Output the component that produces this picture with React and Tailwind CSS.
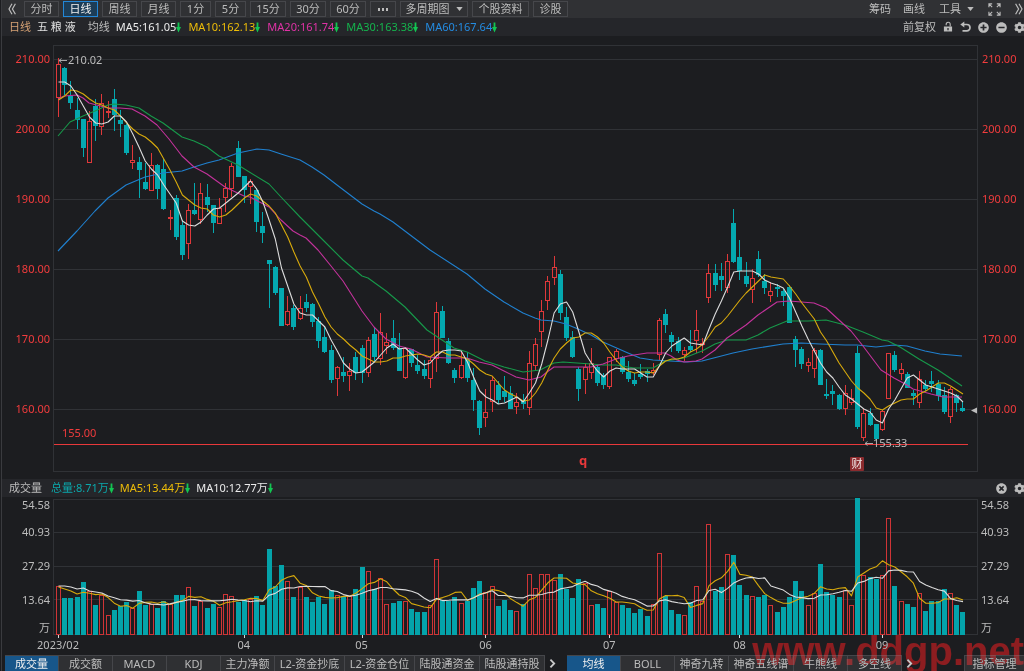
import React, { useState } from 'react';
import { FaCog, FaPlusCircle, FaMinusCircle, FaTimesCircle } from 'react-icons/fa';

// [up, high, bodyTop, bodyBottom, low, volumeTop] in panel coordinates
const CANDLES = [
  [1, 58, 64, 98, 117, 586], [0, 67, 68, 85, 95, 598], [0, 81, 96, 103, 109, 598], [0, 98, 110, 120, 129, 597],
  [0, 119, 119, 148, 157, 582], [1, 111, 121, 163, 163, 591], [0, 99, 106, 126, 141, 605], [1, 94, 103, 127, 135, 595],
  [1, 101, 111, 113, 118, 615], [0, 89, 99, 115, 131, 610], [0, 110, 120, 124, 137, 606], [0, 124, 125, 153, 155, 602],
  [1, 145, 160, 163, 169, 608], [0, 157, 162, 170, 198, 591], [0, 163, 182, 189, 190, 605], [1, 153, 165, 191, 191, 604],
  [0, 164, 165, 189, 199, 608], [0, 159, 169, 209, 210, 601], [1, 210, 217, 219, 230, 604], [0, 195, 198, 237, 240, 595],
  [0, 220, 225, 255, 260, 595], [1, 204, 210, 244, 259, 587], [0, 183, 210, 214, 215, 606], [1, 183, 193, 220, 224, 601],
  [0, 184, 197, 205, 212, 608], [0, 205, 205, 223, 233, 604], [1, 198, 208, 224, 224, 607], [1, 183, 188, 198, 212, 594],
  [1, 163, 166, 189, 197, 596], [0, 141, 148, 177, 177, 602], [0, 176, 176, 190, 203, 600], [1, 179, 181, 187, 204, 599],
  [0, 188, 190, 222, 232, 596], [0, 212, 226, 233, 243, 605], [0, 260, 260, 264, 308, 549], [0, 266, 267, 293, 295, 586],
  [0, 288, 288, 326, 326, 565], [1, 296, 311, 325, 326, 581], [0, 305, 308, 327, 330, 597], [1, 296, 308, 319, 320, 587],
  [0, 294, 302, 308, 312, 597], [0, 303, 304, 322, 327, 602], [0, 317, 321, 341, 348, 597], [0, 327, 337, 352, 353, 604],
  [0, 345, 350, 380, 383, 590], [1, 366, 367, 379, 396, 595], [0, 357, 372, 376, 382, 596], [1, 363, 371, 376, 391, 596],
  [0, 352, 357, 373, 380, 589], [0, 345, 348, 373, 383, 567], [1, 337, 340, 373, 377, 571], [0, 327, 334, 357, 361, 589],
  [1, 313, 332, 359, 365, 578], [1, 333, 342, 346, 354, 604], [0, 320, 338, 348, 350, 603], [0, 333, 348, 371, 371, 601],
  [1, 347, 348, 378, 379, 601], [0, 349, 349, 363, 367, 609], [0, 355, 365, 371, 374, 612], [0, 360, 369, 376, 379, 612],
  [1, 357, 360, 379, 388, 605], [1, 302, 312, 359, 372, 559], [0, 306, 311, 338, 338, 600], [0, 338, 341, 363, 364, 601],
  [0, 368, 370, 378, 383, 597], [1, 352, 365, 378, 379, 603], [0, 352, 359, 378, 382, 601], [0, 368, 380, 400, 411, 588],
  [0, 400, 401, 428, 435, 581], [1, 389, 412, 418, 427, 592], [1, 376, 380, 402, 412, 586], [0, 381, 385, 400, 404, 606],
  [0, 376, 391, 397, 402, 600], [0, 386, 393, 409, 409, 610], [1, 393, 402, 407, 414, 611], [0, 394, 400, 404, 409, 604],
  [1, 351, 363, 408, 415, 574], [1, 338, 344, 366, 370, 588], [1, 300, 311, 332, 347, 574], [1, 276, 281, 301, 310, 574],
  [1, 256, 267, 278, 285, 580], [0, 270, 274, 313, 320, 574], [0, 307, 317, 338, 341, 589], [0, 331, 337, 357, 358, 598],
  [0, 367, 369, 389, 401, 579], [1, 363, 367, 380, 394, 583], [1, 348, 363, 373, 379, 605], [0, 364, 367, 383, 386, 604],
  [0, 373, 375, 385, 389, 608], [1, 357, 357, 387, 389, 591], [1, 349, 351, 359, 362, 602], [0, 356, 357, 372, 374, 605],
  [0, 361, 372, 379, 382, 608], [0, 373, 380, 384, 386, 613], [0, 364, 374, 377, 379, 609], [0, 369, 371, 374, 382, 616],
  [1, 363, 370, 373, 375, 604], [1, 318, 320, 355, 360, 553], [0, 309, 314, 325, 333, 596], [0, 332, 335, 342, 352, 610],
  [0, 337, 341, 351, 353, 614], [1, 347, 350, 355, 361, 615], [0, 330, 346, 350, 352, 602], [1, 310, 330, 341, 353, 586],
  [1, 338, 343, 345, 353, 601], [1, 264, 273, 298, 303, 524], [0, 264, 273, 285, 291, 591], [0, 263, 276, 280, 291, 587],
  [1, 254, 261, 288, 293, 554], [0, 209, 223, 262, 263, 555], [0, 240, 257, 271, 280, 585], [0, 262, 276, 284, 287, 595],
  [1, 269, 278, 290, 303, 596], [0, 251, 259, 275, 277, 597], [0, 274, 281, 288, 294, 595], [1, 282, 291, 296, 302, 605],
  [0, 284, 287, 289, 297, 612], [0, 289, 291, 296, 306, 607], [0, 285, 287, 323, 323, 597], [0, 336, 339, 350, 367, 581],
  [0, 347, 349, 364, 369, 591], [1, 358, 362, 366, 372, 605], [1, 348, 350, 369, 378, 593], [0, 349, 350, 385, 385, 564],
  [0, 379, 394, 396, 399, 592], [0, 385, 391, 394, 405, 595], [0, 394, 395, 409, 410, 597], [1, 385, 393, 409, 415, 590],
  [1, 389, 398, 403, 405, 605], [0, 346, 353, 427, 429, 498], [1, 409, 413, 438, 441, 575], [0, 408, 413, 425, 426, 577],
  [0, 424, 424, 439, 440, 579], [1, 410, 411, 430, 431, 575], [1, 353, 353, 399, 399, 518], [0, 351, 355, 370, 372, 586],
  [1, 363, 369, 374, 380, 601], [0, 372, 374, 388, 388, 604], [0, 390, 393, 396, 405, 607], [1, 371, 379, 403, 408, 593],
  [0, 380, 385, 389, 391, 611], [0, 371, 381, 384, 392, 601], [0, 380, 384, 396, 401, 601], [0, 387, 395, 412, 414, 589],
  [1, 387, 389, 417, 423, 593], [0, 394, 395, 403, 412, 605], [0, 402, 408, 411, 412, 612],
];

const MA5 = [
  82, 82, 86, 95, 106, 117, 123, 124, 122, 116, 116, 122, 134, 147, 161, 169, 175, 185, 194, 203, 221, 225, 226, 222,
  215, 209, 208, 203, 198, 193, 187, 181, 189, 202, 220, 239, 268, 286, 304, 313, 315, 315, 321, 327, 340, 351, 363, 369,
  373, 372, 367, 362, 355, 348, 344, 349, 348, 354, 360, 365, 363, 356, 351, 350, 350, 351, 362, 377, 391, 397, 400, 404,
  403, 400, 397, 402, 393, 383, 364, 340, 313, 304, 302, 312, 332, 353, 363, 371, 377, 371, 368, 369, 369, 369, 373, 377,
  377, 366, 353, 346, 342, 338, 343, 344, 345, 329, 314, 301, 287, 272, 271, 271, 271, 274, 280, 283, 285, 288, 298, 312,
  326, 339, 351, 363, 372, 378, 387, 395, 399, 404, 409, 412, 420, 423, 409, 400, 389, 378, 375, 380, 385, 387, 389, 391,
  393, 396, 402,
];

const MA10 = [
  100, 96, 90, 91, 94, 99, 103, 105, 108, 110, 116, 123, 129, 134, 137, 142, 148, 159, 170, 182, 195, 200, 205, 208,
  209, 215, 217, 215, 210, 204, 198, 194, 196, 201, 206, 213, 225, 237, 252, 266, 277, 292, 304, 317, 327, 334, 339, 345,
  350, 356, 359, 362, 362, 361, 358, 358, 356, 355, 354, 355, 357, 352, 352, 355, 355, 357, 359, 364, 370, 374, 376, 383,
  390, 394, 397, 401, 400, 393, 383, 370, 358, 349, 343, 338, 337, 333, 333, 337, 343, 352, 360, 367, 371, 373, 372, 372,
  373, 366, 361, 359, 359, 357, 352, 349, 344, 336, 327, 323, 316, 308, 300, 293, 287, 281, 275, 277, 278, 279, 286, 294,
  303, 311, 319, 332, 341, 352, 363, 372, 381, 388, 393, 399, 408, 410, 406, 403, 400, 399, 399, 394, 391, 387, 383, 383,
  386, 390, 394,
];

const MA20 =
  '58,99 64,96 77,95 83,98 89,103 108,108 120,108 132,109 145,116 157,125 169,139 182,156 194,167 207,174 225,187 244,196 250,197 269,207 281,220 293,231 300,235 306,238 318,250 331,266 343,281 362,311 374,327 386,339 399,346 411,349 427,357 448,358 467,358 479,362 492,365 504,371 516,377 529,380 541,377 547,372 554,367 591,367 603,364 616,359 628,356 647,353 665,353 671,356 677,360 684,362 696,361 702,359 715,350 727,338 746,325 758,315 777,302 789,301 814,303 826,308 839,320 851,331 863,346 881,370 894,378 907,385 913,389 931,394 943,397 962,397';
const MA30 =
  '58,136 70,122 83,116 95,111 108,105 114,104 126,105 139,108 151,116 163,123 182,137 194,141 207,147 219,156 238,165 269,184 281,197 300,217 324,241 343,260 362,276 368,278 386,291 405,307 427,330 442,340 454,348 467,352 485,361 504,367 523,372 540,370 554,363 563,362 591,364 603,365 616,365 634,368 653,368 665,361 684,358 702,351 715,344 727,340 746,340 758,335 770,328 787,321 808,321 826,320 845,325 863,332 882,340 888,341 900,347 919,359 938,370 950,378 962,386';
const MA60 =
  '58,251 77,231 95,211 108,198 126,185 145,177 163,173 182,171 194,167 207,163 219,160 238,153 257,149 269,150 281,154 300,160 312,167 324,175 337,185 362,204 374,211 380,214 393,222 430,250 467,274 485,289 504,302 523,313 535,318 541,320 554,321 566,324 578,329 591,335 603,342 628,353 640,358 653,360 687,362 702,361 733,353 752,349 783,344 801,343 820,344 845,345 857,345 876,347 894,345 907,346 925,351 940,354 962,356';

const BASE = 635;
const xOf = (i) => 58 + i * 6.195;
const toLine = (ys) => ys.map((y, i) => `${(xOf(i) + 0.5).toFixed(1)},${y}`).join(' ');

// Moving average of the volume bars; seed holds the values before the window is full
const volumeAverage = (days, seed) =>
  CANDLES.map((_, i) => {
    if (i < seed.length) return seed[i];
    let sum = 0;
    for (let k = i - days + 1; k <= i; k++) sum += BASE - CANDLES[k][5];
    return BASE - sum / days;
  });

const VOL_MA5 = volumeAverage(5, [587, 589, 591, 594]);
const VOL_MA10 = volumeAverage(10, [586, 586, 587, 589, 588, 591, 592, 593, 596]);

const PERIODS = [
  { label: '分时', width: 'w-[35px]' },
  { label: '日线', width: 'w-[35px]' },
  { label: '周线', width: 'w-[35px]' },
  { label: '月线', width: 'w-[35px]' },
  { label: '1分', width: 'w-[31px]' },
  { label: '5分', width: 'w-[31px]' },
  { label: '15分', width: 'w-[36px]' },
  { label: '30分', width: 'w-[36px]' },
  { label: '60分', width: 'w-[36px]' },
];

const PRICE_MA = [
  { text: 'MA5:161.05', color: 'text-[#ececec]' },
  { text: 'MA10:162.13', color: 'text-[#eebd08]' },
  { text: 'MA20:161.74', color: 'text-[#e032a6]' },
  { text: 'MA30:163.38', color: 'text-[#15b34d]' },
  { text: 'MA60:167.64', color: 'text-[#248ce2]' },
];

const VOLUME_MA = [
  { text: '总量:8.71万', color: 'text-[#0ba8ac]' },
  { text: 'MA5:13.44万', color: 'text-[#eebd08]' },
  { text: 'MA10:12.77万', color: 'text-[#ececec]' },
];

const LEFT_TABS = [
  { label: '成交量', width: 'w-[54px]' },
  { label: '成交额', width: 'w-[54px]' },
  { label: 'MACD', width: 'w-[54px]' },
  { label: 'KDJ', width: 'w-[54px]' },
  { label: '主力净额', width: 'w-[54px]' },
  { label: 'L2-资金抄底', width: 'w-[70px]' },
  { label: 'L2-资金仓位', width: 'w-[70px]' },
  { label: '陆股通资金', width: 'w-[65px]' },
  { label: '陆股通持股', width: 'w-[65px]' },
];

const RIGHT_TABS = [
  { label: '均线', width: 'w-[54px]' },
  { label: 'BOLL', width: 'w-[54px]' },
  { label: '神奇九转', width: 'w-[54px]' },
  { label: '神奇五线谱', width: 'w-[65px]' },
  { label: '牛熊线', width: 'w-[54px]' },
  { label: '多空线', width: 'w-[54px]' },
];

const MONTHS = [
  { i: 0, label: '2023/02' },
  { i: 30, label: '04' },
  { i: 49, label: '05' },
  { i: 69, label: '06' },
  { i: 89, label: '07' },
  { i: 110, label: '08' },
  { i: 133, label: '09' },
];

const Caret = () => (
  <svg viewBox="0 0 8 5" className="h-[4px] w-[7px] fill-current" aria-hidden="true">
    <path d="M0 0h8L4 5z" />
  </svg>
);

const DownArrow = () => (
  <svg viewBox="0 0 5 11" className="h-[11px] w-[5px]" aria-hidden="true">
    <path d="M1.6 0.5h1.800v4.500H5L2.500 10.500 0 5h1.600z" fill="#12c552" />
  </svg>
);

const DoubleChevron = ({ flip }) => (
  <svg viewBox="0 0 8 12" className={flip ? 'h-3 w-2 rotate-180' : 'h-3 w-2'} fill="none" stroke="currentColor" strokeWidth="1.2" aria-hidden="true">
    <path d="M4 0.8 1 6l3 5.2M7.4 0.8l-3 5.2 3 5.2" />
  </svg>
);

const NextChevron = () => (
  <svg viewBox="0 0 7 10" className="h-[9px] w-[7px]" fill="none" stroke="#c9c9c9" strokeWidth="2" aria-hidden="true">
    <path d="M1.2 0.8 5.4 5 1.2 9.2" />
  </svg>
);

const Legend = ({ items, gap }) => (
  <div className={`flex ${gap}`}>
    {items.map((item) => (
      <span key={item.text} className={`flex items-center ${item.color}`}>
        {item.text}
        <DownArrow />
      </span>
    ))}
  </div>
);

const TabStrip = ({ tabs, active, onSelect }) => (
  <div className="flex">
    {tabs.map((tab) => (
      <button
        key={tab.label}
        onClick={() => onSelect(tab.label)}
        className={`${tab.width} h-4 shrink-0 whitespace-nowrap border-t border-r border-[#45464a] text-center leading-[15px] ${
          active === tab.label ? 'bg-[#17568a] text-[#f0f0f0]' : 'bg-[#2f3033] text-[#bcbcbc]'
        }`}
      >
        {tab.label}
      </button>
    ))}
  </div>
);

const PriceChart = () => (
  <svg viewBox="2 36 1022 443" className="block h-auto w-full" role="img" aria-label="日线">
    <g fill="none" stroke="#303236" shapeRendering="crispEdges">
      <rect x="53.5" y="45.5" width="924" height="426" />
      {[59.5, 129.5, 199.5, 269.5, 339.5, 409.5].map((y) => (
        <path key={y} d={`M54 ${y}H977`} />
      ))}
    </g>

    <g fill="#f23c3d">
      {[210, 200, 190, 180, 170, 160].map((price, n) => (
        <React.Fragment key={price}>
          <text x="50" y={63 + n * 70} textAnchor="end">{price}.00</text>
          <text x="982" y={63 + n * 70}>{price}.00</text>
        </React.Fragment>
      ))}
      <text x="62" y="437">155.00</text>
    </g>

    <g shapeRendering="crispEdges">
      {CANDLES.map(([up, high, top, bottom, low], i) => {
        const x = Math.round(xOf(i));
        return up ? (
          <g key={i} fill="none" stroke="#e0383a">
            <path d={`M${x + 0.5} ${high}V${top}M${x + 0.5} ${bottom}V${low}`} />
            <rect x={x - 1.5} y={top + 0.5} width="4" height={Math.max(bottom - top - 1, 1)} />
          </g>
        ) : (
          <g key={i} fill="#04a9b0">
            <rect x={x} y={high} width="1" height={low - high} />
            <rect x={x - 2} y={top} width="5" height={bottom - top} />
          </g>
        );
      })}
    </g>

    <path d="M54 444.5H968" stroke="#e8383a" shapeRendering="crispEdges" />

    <g fill="none" strokeWidth="1.1" strokeLinejoin="round">
      <polyline points={MA60} stroke="#2080cf" />
      <polyline points={MA30} stroke="#17994a" />
      <polyline points={MA20} stroke="#c3329b" />
      <polyline points={toLine(MA10)} stroke="#d8aa0c" />
      <polyline points={toLine(MA5)} stroke="#dcdcdc" />
    </g>

    <g fill="#bcbcbc">
      <path d="M59 60.5h8M61.5 58.5l-2.5 2 2.5 2M865 443.5h8M867.5 441.5l-2.5 2 2.5 2" fill="none" stroke="#a9a9a9" />
      <text x="68" y="64">210.02</text>
      <text x="873" y="447">155.33</text>
      <path d="M971 410.5l6-3v6z" />
    </g>

    <text x="583" y="465" textAnchor="middle" fill="#e8383a" className="text-[13px] font-bold">q</text>
    <rect x="850" y="457" width="14" height="14" rx="1" fill="#8b2b2e" />
    <text x="857" y="468" textAnchor="middle" fill="#f0e4e4">财</text>
  </svg>
);

const VolumeChart = () => (
  <svg viewBox="2 497 1022 158" className="block h-auto w-full" role="img" aria-label="成交量">
    <g fill="none" stroke="#303236" shapeRendering="crispEdges">
      <rect x="53.5" y="499.5" width="924" height="135" />
      {[532.5, 566.5, 599.5].map((y) => (
        <path key={y} d={`M54 ${y}H977`} />
      ))}
    </g>

    <g shapeRendering="crispEdges">
      {CANDLES.map(([up, , , , , top], i) => {
        const x = Math.round(xOf(i)) - 2;
        return up ? (
          <rect key={i} x={x + 0.5} y={top + 0.5} width="4" height={BASE - top - 1} fill="none" stroke="#cf3436" />
        ) : (
          <rect key={i} x={x} y={top} width="5" height={BASE - top} fill="#04a3aa" />
        );
      })}
    </g>

    <g fill="none" strokeWidth="1.1" strokeLinejoin="round">
      <polyline points={toLine(VOL_MA5)} stroke="#d8aa0c" />
      <polyline points={toLine(VOL_MA10)} stroke="#dcdcdc" />
    </g>

    <g fill="#bcbcbc">
      {[['54.58', 509], ['40.93', 536], ['27.29', 570], ['13.64', 604], ['万', 632]].map(([label, y]) => (
        <React.Fragment key={label}>
          <text x="50" y={y} textAnchor="end">{label}</text>
          <text x="981" y={y}>{label}</text>
        </React.Fragment>
      ))}
      {MONTHS.map(({ i, label }) => (
        <React.Fragment key={label}>
          <rect x={Math.round(xOf(i))} y="635" width="1" height="3" fill="#d8d8d8" />
          <text x={xOf(i)} y="649" textAnchor="middle">{label}</text>
        </React.Fragment>
      ))}
    </g>
  </svg>
);

const App = () => {
  const [period, setPeriod] = useState('日线');
  const [indicator, setIndicator] = useState('成交量');
  const [overlay, setOverlay] = useState('均线');

  const boxed = 'flex h-4 shrink-0 items-center justify-center whitespace-nowrap border';

  return (
    <div className="relative w-full overflow-hidden bg-[#1c1d20] pl-px font-['Noto_Sans','Noto_Sans_CJK_SC',sans-serif] text-[11px] leading-4 text-[#bcbcbc]">
      <div className="border-l border-[#3a3b3f]">
        {/* Period toolbar */}
        <div className="flex h-[18px] items-center bg-[#303134] pl-[6px]">
          <button aria-label="收起" className="mr-2"><DoubleChevron /></button>
          <div className="flex gap-1">
            {PERIODS.map(({ label, width }) => (
              <button
                key={label}
                onClick={() => setPeriod(label)}
                className={`${boxed} ${width} ${
                  period === label ? 'border-[#2287d8] bg-[#1d3d57] text-[#f0f0f0]' : 'border-[#46474b]'
                }`}
              >
                {label}
              </button>
            ))}
            <button aria-label="更多周期" className={`${boxed} w-[26px] gap-[2px] border-[#46474b]`}>
              <i className="h-[3px] w-[2px] bg-current" />
              <i className="h-[3px] w-[2px] bg-current" />
              <i className="h-[3px] w-[2px] bg-current" />
            </button>
            <button aria-haspopup="menu" className={`${boxed} w-[68px] gap-[6px] border-[#46474b]`}>
              多周期图
              <Caret />
            </button>
            <button className={`${boxed} w-[57px] border-[#46474b]`}>个股资料</button>
            <button className={`${boxed} w-[35px] border-[#46474b]`}>诊股</button>
          </div>
          <div className="ml-auto flex items-center pr-px">
            <button className="mr-3">筹码</button>
            <button className="mr-[14px]">画线</button>
            <button aria-haspopup="menu" className="mr-[14px] flex items-center gap-[6px]">
              工具
              <Caret />
            </button>
            <button aria-label="全屏" className="mr-[14px]">
              <svg viewBox="0 0 14 14" className="size-[13px]" fill="none" stroke="currentColor" strokeWidth="1.2">
                <path d="M1 4.5V1h3.5M1 1l3.5 3.5M9.500 1H13v3.500M13 1 9.500 4.500M1 9.500V13h3.500M1 13l3.500-3.500M13 9.500V13H9.500M13 13 9.500 9.500" />
              </svg>
            </button>
            <button aria-label="展开"><DoubleChevron flip /></button>
          </div>
        </div>

        {/* Moving average legend */}
        <div className="flex h-[18px] items-center bg-[#25262a] pl-[7px]">
          <span className="mr-[6px] text-[#d6a274]">日线</span>
          <span className="mr-3 text-[#e0e0e0]">五 粮 液</span>
          <span className="mr-[6px]">均线</span>
          <Legend items={PRICE_MA} gap="gap-[7px]" />
          <div className="-mr-px ml-auto flex items-center gap-[7px]">
            <button>前复权</button>
            <button aria-label="锁定">
              <svg viewBox="0 0 11 12" className="h-[12px] w-[10px]" aria-hidden="true">
                <path d="M3.5 4V3a2.2 2.2 0 0 1 4.4 0v2.5" fill="none" stroke="currentColor" strokeWidth="1.2" />
                <path d="M1 5.500h9V11H1zM4.800 7v2.500h1.400V7z" fill="currentColor" fillRule="evenodd" />
              </svg>
            </button>
            <button aria-label="撤销">
              <svg viewBox="0 0 11 12" className="h-[12px] w-[11px]" aria-hidden="true">
                <path d="M3 3.5h3.8a3.2 3.2 0 0 1 0 6.4H2.5" fill="none" stroke="currentColor" strokeWidth="1.7" />
                <path d="M0.3 3.5 4.3 0.5v6z" fill="currentColor" />
              </svg>
            </button>
            <button aria-label="放大"><FaPlusCircle className="size-[11px]" /></button>
            <button aria-label="缩小"><FaMinusCircle className="size-[11px]" /></button>
            <button aria-label="设置"><FaCog className="size-[11px]" /></button>
          </div>
        </div>

        <PriceChart />

        {/* Volume legend */}
        <div className="flex h-[18px] items-center bg-[#25262a] pl-[7px]">
          <span className="mr-[9px]">成交量</span>
          <Legend items={VOLUME_MA} gap="gap-[6px]" />
          <div className="-mr-px ml-auto flex items-center gap-[7px]">
            <button aria-label="关闭"><FaTimesCircle className="size-[11px]" /></button>
            <button aria-label="指标设置"><FaCog className="size-[11px]" /></button>
          </div>
        </div>

        <VolumeChart />

        {/* Indicator tabs */}
        <div className="flex h-4 pl-[3px]">
          <TabStrip tabs={LEFT_TABS} active={indicator} onSelect={setIndicator} />
          <button aria-label="更多指标" className="flex w-[22px] items-center pl-1"><NextChevron /></button>
          <TabStrip tabs={RIGHT_TABS} active={overlay} onSelect={setOverlay} />
          <button aria-label="更多均线" className="flex w-4 items-center pl-1"><NextChevron /></button>
          <button className="ml-auto h-4 w-[60px] border-t border-l border-[#45464a] bg-[#2f3033] leading-[15px]">指标管理</button>
        </div>
      </div>

      <div className="pointer-events-none absolute right-0 bottom-0 font-['Liberation_Sans',sans-serif] text-[40px] leading-10 font-bold text-[#8d0f12] mix-blend-lighten">
        www.ddgp.net
      </div>
    </div>
  );
};

export default App;
